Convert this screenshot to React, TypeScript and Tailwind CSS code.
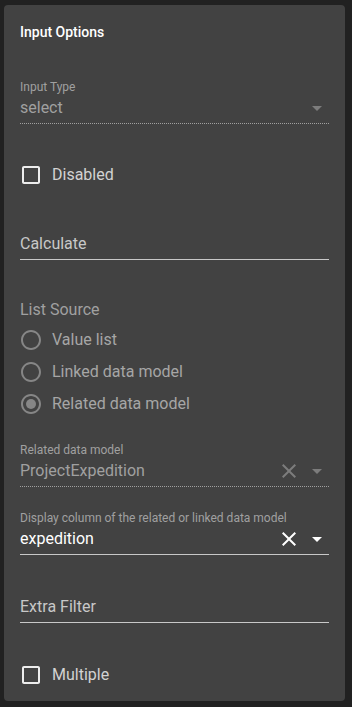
import React from "react";

const ArrowDrop = ({ color }: { color: string }) => (
  <svg viewBox="0 0 24 24" className="w-6 h-6 shrink-0" fill={color}>
    <path d="M7 10l5 5 5-5z" />
  </svg>
);

const CloseIcon = ({ color }: { color: string }) => (
  <svg viewBox="0 0 24 24" className="w-6 h-6 shrink-0" fill={color}>
    <path d="M19 6.41L17.59 5 12 10.59 6.41 5 5 6.41 10.59 12 5 17.59 6.41 19 12 13.41 17.59 19 19 17.59 13.41 12z" />
  </svg>
);

function CheckRow({ label }: { label: string }) {
  return (
    <div className="flex items-center h-6 -ml-[1px]">
      <svg viewBox="0 0 24 24" className="w-6 h-6 shrink-0" fill="#ececec">
        <path d="M19 5v14H5V5h14m0-2H5c-1.11 0-2 .9-2 2v14c0 1.1.89 2 2 2h14c1.1 0 2-.9 2-2V5c0-1.1-.9-2-2-2z" />
      </svg>
      <span className="ml-[9px] text-[16px] leading-6 text-[#d2d2d2]">{label}</span>
    </div>
  );
}

function RadioRow({ label, checked }: { label: string; checked?: boolean }) {
  return (
    <div className="flex items-center h-8 -ml-[1px]">
      <svg viewBox="0 0 24 24" className="w-6 h-6 shrink-0" fill="#868686">
        <path d="M12 2C6.48 2 2 6.48 2 12s4.48 10 10 10 10-4.48 10-10S17.52 2 12 2zm0 18c-4.42 0-8-3.58-8-8s3.58-8 8-8 8 3.58 8 8-3.58 8-8 8z" />
        {checked && <circle cx="12" cy="12" r="5" />}
      </svg>
      <span className="ml-[9px] text-[16px] leading-6 text-[#a6a6a6]">{label}</span>
    </div>
  );
}

function SelectField({
  label,
  value,
  disabled,
  clearable,
}: {
  label: string;
  value: string;
  disabled?: boolean;
  clearable?: boolean;
}) {
  const iconColor = disabled ? "#7c7c7c" : "#ffffff";
  return (
    <div
      className={
        disabled
          ? "border-b border-dotted border-[#a0a0a0] pb-[4px]"
          : "border-b border-[#c8c8c8] pb-[4px]"
      }
    >
      <div className="h-[17px] text-[12px] leading-[17px] text-[#a0a0a0] whitespace-nowrap">
        {label}
      </div>
      <div className="flex items-center h-[23px]">
        <span
          className={
            disabled
              ? "flex-1 text-[16px] leading-[23px] text-[#a0a0a0]"
              : "flex-1 text-[16px] leading-[23px] text-white"
          }
        >
          {value}
        </span>
        {clearable && <CloseIcon color={iconColor} />}
        {clearable && <div className="w-1" />}
        <ArrowDrop color={iconColor} />
      </div>
    </div>
  );
}

function TextField({ label }: { label: string }) {
  return (
    <div className="border-b border-[#c8c8c8] pb-[4px]">
      <div className="h-[17px]" />
      <div className="h-[23px] text-[16px] leading-[23px] text-[#c8c8c8]">{label}</div>
    </div>
  );
}

export default function App() {
  return (
    <div
      className="min-h-screen bg-[#212121] pt-[5px]"
      style={{ fontFamily: "Roboto, 'Liberation Sans', sans-serif" }}
    >
      <div className="ml-[4px] w-[341px] bg-[#424242] rounded-[4px] pl-[16px] pr-[16px] pt-[17px] pb-[14px] flex flex-col">
        <div className="h-5 text-[14px] leading-5 font-medium text-white">Input Options</div>

        <div className="mt-[37px]">
          <SelectField label="Input Type" value="select" disabled />
        </div>

        <div className="mt-[39px]">
          <CheckRow label="Disabled" />
        </div>

        <div className="mt-[28px]">
          <TextField label="Calculate" />
        </div>

        <div className="mt-[38px] h-6 text-[16px] leading-6 text-[#a0a0a0]">List Source</div>
        <div className="mt-[2px] flex flex-col">
          <RadioRow label="Value list" />
          <RadioRow label="Linked data model" />
          <RadioRow label="Related data model" checked />
        </div>

        <div className="mt-[22px]">
          <SelectField label="Related data model" value="ProjectExpedition" disabled clearable />
        </div>

        <div className="mt-[23px]">
          <SelectField
            label="Display column of the related or linked data model"
            value="expedition"
            clearable
          />
        </div>

        <div className="mt-[23px]">
          <TextField label="Extra Filter" />
        </div>

        <div className="mt-[40px]">
          <CheckRow label="Multiple" />
        </div>
      </div>
    </div>
  );
}
